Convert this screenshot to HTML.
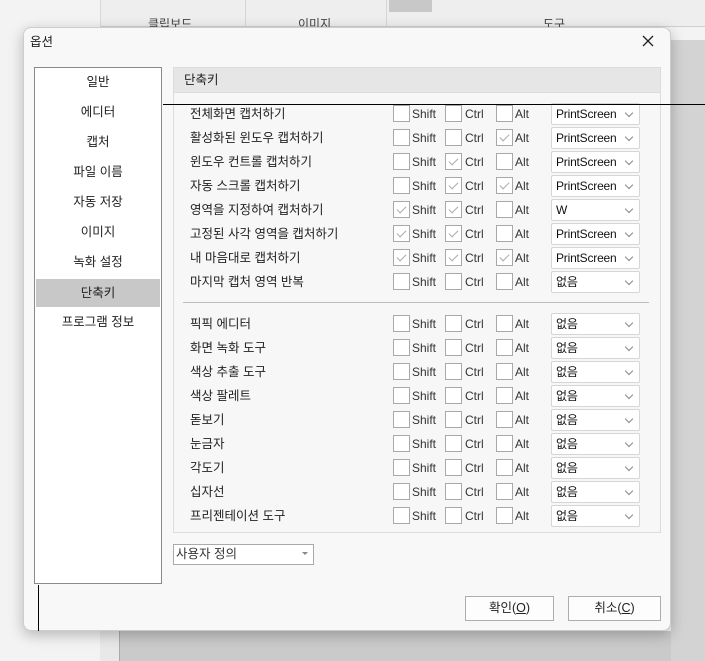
<!DOCTYPE html>
<html><head><meta charset="utf-8"><style>
*{margin:0;padding:0;box-sizing:border-box}
body{width:705px;height:661px;position:relative;overflow:hidden;background:#f3f3f3;font-family:"Liberation Sans","Noto Sans CJK KR",sans-serif;font-size:12px;color:#222}
.a{position:absolute}
.rib{left:100px;top:0;width:605px;height:27px;background:#eeeeee;border-bottom:1px solid #cfcfcf}
.dlg{left:23px;top:27px;width:648px;height:604px;background:#f8f8f8;border:1px solid #cdcdcd;border-radius:8px;box-shadow:0 4px 14px rgba(0,0,0,.25)}
.list{left:34px;top:67px;width:128px;height:517px;background:#fff;border:1px solid #8a8a8a}
.li{position:absolute;left:0;width:126px;text-align:center;font-size:12.5px;height:28px;line-height:28px}
.panel{left:173px;top:67px;width:488px;height:466px;border:1px solid #dcdcdc;background:#f7f7f7}
.hdr{left:173px;top:67px;width:488px;height:26px;background:#e6e6e6;border:1px solid #dcdcdc;padding-left:10px;line-height:24px;font-size:12.5px}
.lb{left:190px;font-size:12.5px;height:20px;line-height:20px}
.cb{width:17px;height:17px;border:1px solid #a8a8a8;background:#fff}
.ck::after{content:"";position:absolute;left:5px;top:2px;width:4px;height:8px;border:solid #aaa;border-width:0 1px 1px 0;transform:rotate(45deg)}
.t{font-size:12px;color:#333;height:20px;line-height:20px}
.dd{left:551px;width:89px;height:22px;background:#fff;border:1px solid #d6d6d6;border-radius:2px;font-size:12px;line-height:20px;padding-left:4px;color:#111;letter-spacing:-0.2px}
.dd::after{content:"";position:absolute;right:7px;top:6px;width:5px;height:5px;border:solid #888;border-width:0 1px 1px 0;transform:rotate(45deg)}
.btn{top:596px;height:25px;border:1px solid #adadad;background:#fdfdfd;text-align:center;line-height:23px;font-size:12.5px}
</style></head><body>
<div class="a rib"></div>
<div class="a" style="left:100px;top:0;width:1px;height:661px;background:#d8d8d8"></div>
<div class="a" style="left:245px;top:0;width:1px;height:27px;background:#d5d5d5"></div>
<div class="a" style="left:386px;top:0;width:1px;height:27px;background:#d5d5d5"></div>
<div class="a" style="left:389px;top:0;width:43px;height:12px;background:#c8c8c8"></div>
<div class="a" style="left:148px;top:15px;font-size:12px;color:#444">클립보드</div>
<div class="a" style="left:298px;top:15px;font-size:12px;color:#444">이미지</div>
<div class="a" style="left:543px;top:15px;font-size:12px;color:#444">도구</div>
<div class="a" style="left:671px;top:40px;width:34px;height:621px;background:#d3d3d3"></div>
<div class="a" style="left:100px;top:631px;width:20px;height:30px;background:#e8e8e8;border-right:1px solid #aaa"></div>
<div class="a" style="left:120px;top:631px;width:551px;height:30px;background:#cacaca"></div>

<div class="a dlg"></div>
<div class="a" style="left:30px;top:31px;font-size:12.5px">옵션</div>
<svg class="a" style="left:642px;top:35px" width="12" height="12"><path d="M1 1L11 11M11 1L1 11" stroke="#222" stroke-width="1.3"/></svg>

<div class="a list">
<div class="li" style="top:0">일반</div>
<div class="li" style="top:30px">에디터</div>
<div class="li" style="top:60px">캡처</div>
<div class="li" style="top:90px">파일 이름</div>
<div class="li" style="top:120px">자동 저장</div>
<div class="li" style="top:150px">이미지</div>
<div class="li" style="top:180px">녹화 설정</div>
<div class="li" style="top:211px;left:1px;width:124px;background:#c8c8c8">단축키</div>
<div class="li" style="top:240px">프로그램 정보</div>
</div>

<div class="a panel"></div>
<div class="a hdr">단축키</div>
<div class="a" style="left:183px;top:302px;width:466px;height:1px;background:#bdbdbd"></div>

<div class="a lb" style="top:104px">전체화면 캡처하기</div>
<div class="a lb" style="top:128px">활성화된 윈도우 캡처하기</div>
<div class="a lb" style="top:152px">윈도우 컨트롤 캡처하기</div>
<div class="a lb" style="top:176px">자동 스크롤 캡처하기</div>
<div class="a lb" style="top:200px">영역을 지정하여 캡처하기</div>
<div class="a lb" style="top:224px">고정된 사각 영역을 캡처하기</div>
<div class="a lb" style="top:248px">내 마음대로 캡처하기</div>
<div class="a lb" style="top:272px">마지막 캡처 영역 반복</div>
<div class="a lb" style="top:314px">픽픽 에디터</div>
<div class="a lb" style="top:338px">화면 녹화 도구</div>
<div class="a lb" style="top:362px">색상 추출 도구</div>
<div class="a lb" style="top:386px">색상 팔레트</div>
<div class="a lb" style="top:410px">돋보기</div>
<div class="a lb" style="top:434px">눈금자</div>
<div class="a lb" style="top:458px">각도기</div>
<div class="a lb" style="top:482px">십자선</div>
<div class="a lb" style="top:506px">프리젠테이션 도구</div>

<div class="a cb" style="left:393px;top:105px"></div><div class="a cb" style="left:445px;top:105px"></div><div class="a cb" style="left:496px;top:105px"></div>
<div class="a cb" style="left:393px;top:129px"></div><div class="a cb" style="left:445px;top:129px"></div><div class="a cb ck" style="left:496px;top:129px"></div>
<div class="a cb" style="left:393px;top:153px"></div><div class="a cb ck" style="left:445px;top:153px"></div><div class="a cb" style="left:496px;top:153px"></div>
<div class="a cb" style="left:393px;top:177px"></div><div class="a cb ck" style="left:445px;top:177px"></div><div class="a cb ck" style="left:496px;top:177px"></div>
<div class="a cb ck" style="left:393px;top:201px"></div><div class="a cb ck" style="left:445px;top:201px"></div><div class="a cb" style="left:496px;top:201px"></div>
<div class="a cb ck" style="left:393px;top:225px"></div><div class="a cb ck" style="left:445px;top:225px"></div><div class="a cb" style="left:496px;top:225px"></div>
<div class="a cb ck" style="left:393px;top:249px"></div><div class="a cb ck" style="left:445px;top:249px"></div><div class="a cb ck" style="left:496px;top:249px"></div>
<div class="a cb" style="left:393px;top:273px"></div><div class="a cb" style="left:445px;top:273px"></div><div class="a cb" style="left:496px;top:273px"></div>
<div class="a cb" style="left:393px;top:315px"></div><div class="a cb" style="left:445px;top:315px"></div><div class="a cb" style="left:496px;top:315px"></div>
<div class="a cb" style="left:393px;top:339px"></div><div class="a cb" style="left:445px;top:339px"></div><div class="a cb" style="left:496px;top:339px"></div>
<div class="a cb" style="left:393px;top:363px"></div><div class="a cb" style="left:445px;top:363px"></div><div class="a cb" style="left:496px;top:363px"></div>
<div class="a cb" style="left:393px;top:387px"></div><div class="a cb" style="left:445px;top:387px"></div><div class="a cb" style="left:496px;top:387px"></div>
<div class="a cb" style="left:393px;top:411px"></div><div class="a cb" style="left:445px;top:411px"></div><div class="a cb" style="left:496px;top:411px"></div>
<div class="a cb" style="left:393px;top:435px"></div><div class="a cb" style="left:445px;top:435px"></div><div class="a cb" style="left:496px;top:435px"></div>
<div class="a cb" style="left:393px;top:459px"></div><div class="a cb" style="left:445px;top:459px"></div><div class="a cb" style="left:496px;top:459px"></div>
<div class="a cb" style="left:393px;top:483px"></div><div class="a cb" style="left:445px;top:483px"></div><div class="a cb" style="left:496px;top:483px"></div>
<div class="a cb" style="left:393px;top:507px"></div><div class="a cb" style="left:445px;top:507px"></div><div class="a cb" style="left:496px;top:507px"></div>

<div class="a t" style="left:412px;top:104px">Shift</div><div class="a t" style="left:465px;top:104px">Ctrl</div><div class="a t" style="left:515px;top:104px">Alt</div>
<div class="a t" style="left:412px;top:128px">Shift</div><div class="a t" style="left:465px;top:128px">Ctrl</div><div class="a t" style="left:515px;top:128px">Alt</div>
<div class="a t" style="left:412px;top:152px">Shift</div><div class="a t" style="left:465px;top:152px">Ctrl</div><div class="a t" style="left:515px;top:152px">Alt</div>
<div class="a t" style="left:412px;top:176px">Shift</div><div class="a t" style="left:465px;top:176px">Ctrl</div><div class="a t" style="left:515px;top:176px">Alt</div>
<div class="a t" style="left:412px;top:200px">Shift</div><div class="a t" style="left:465px;top:200px">Ctrl</div><div class="a t" style="left:515px;top:200px">Alt</div>
<div class="a t" style="left:412px;top:224px">Shift</div><div class="a t" style="left:465px;top:224px">Ctrl</div><div class="a t" style="left:515px;top:224px">Alt</div>
<div class="a t" style="left:412px;top:248px">Shift</div><div class="a t" style="left:465px;top:248px">Ctrl</div><div class="a t" style="left:515px;top:248px">Alt</div>
<div class="a t" style="left:412px;top:272px">Shift</div><div class="a t" style="left:465px;top:272px">Ctrl</div><div class="a t" style="left:515px;top:272px">Alt</div>
<div class="a t" style="left:412px;top:314px">Shift</div><div class="a t" style="left:465px;top:314px">Ctrl</div><div class="a t" style="left:515px;top:314px">Alt</div>
<div class="a t" style="left:412px;top:338px">Shift</div><div class="a t" style="left:465px;top:338px">Ctrl</div><div class="a t" style="left:515px;top:338px">Alt</div>
<div class="a t" style="left:412px;top:362px">Shift</div><div class="a t" style="left:465px;top:362px">Ctrl</div><div class="a t" style="left:515px;top:362px">Alt</div>
<div class="a t" style="left:412px;top:386px">Shift</div><div class="a t" style="left:465px;top:386px">Ctrl</div><div class="a t" style="left:515px;top:386px">Alt</div>
<div class="a t" style="left:412px;top:410px">Shift</div><div class="a t" style="left:465px;top:410px">Ctrl</div><div class="a t" style="left:515px;top:410px">Alt</div>
<div class="a t" style="left:412px;top:434px">Shift</div><div class="a t" style="left:465px;top:434px">Ctrl</div><div class="a t" style="left:515px;top:434px">Alt</div>
<div class="a t" style="left:412px;top:458px">Shift</div><div class="a t" style="left:465px;top:458px">Ctrl</div><div class="a t" style="left:515px;top:458px">Alt</div>
<div class="a t" style="left:412px;top:482px">Shift</div><div class="a t" style="left:465px;top:482px">Ctrl</div><div class="a t" style="left:515px;top:482px">Alt</div>
<div class="a t" style="left:412px;top:506px">Shift</div><div class="a t" style="left:465px;top:506px">Ctrl</div><div class="a t" style="left:515px;top:506px">Alt</div>

<div class="a dd" style="top:103px">PrintScreen</div>
<div class="a dd" style="top:127px">PrintScreen</div>
<div class="a dd" style="top:151px">PrintScreen</div>
<div class="a dd" style="top:175px">PrintScreen</div>
<div class="a dd" style="top:199px">W</div>
<div class="a dd" style="top:223px">PrintScreen</div>
<div class="a dd" style="top:247px">PrintScreen</div>
<div class="a dd" style="top:271px">없음</div>
<div class="a dd" style="top:313px">없음</div>
<div class="a dd" style="top:337px">없음</div>
<div class="a dd" style="top:361px">없음</div>
<div class="a dd" style="top:385px">없음</div>
<div class="a dd" style="top:409px">없음</div>
<div class="a dd" style="top:433px">없음</div>
<div class="a dd" style="top:457px">없음</div>
<div class="a dd" style="top:481px">없음</div>
<div class="a dd" style="top:505px">없음</div>

<div class="a" style="left:163px;top:104px;width:542px;height:1px;background:#000"></div>
<div class="a" style="left:38px;top:585px;width:1px;height:46px;background:#000"></div>

<div class="a" style="left:173px;top:544px;width:141px;height:21px;background:#fff;border:1px solid #aaa;font-size:12.5px;line-height:18px;padding-left:2px;color:#333">사용자 정의</div>
<div class="a" style="left:302px;top:552px;width:0;height:0;border-left:3px solid transparent;border-right:3px solid transparent;border-top:3px solid #888"></div>

<div class="a btn" style="left:465px;width:89px">확인(<u>O</u>)</div>
<div class="a btn" style="left:568px;width:93px">취소(<u>C</u>)</div>
</body></html>
